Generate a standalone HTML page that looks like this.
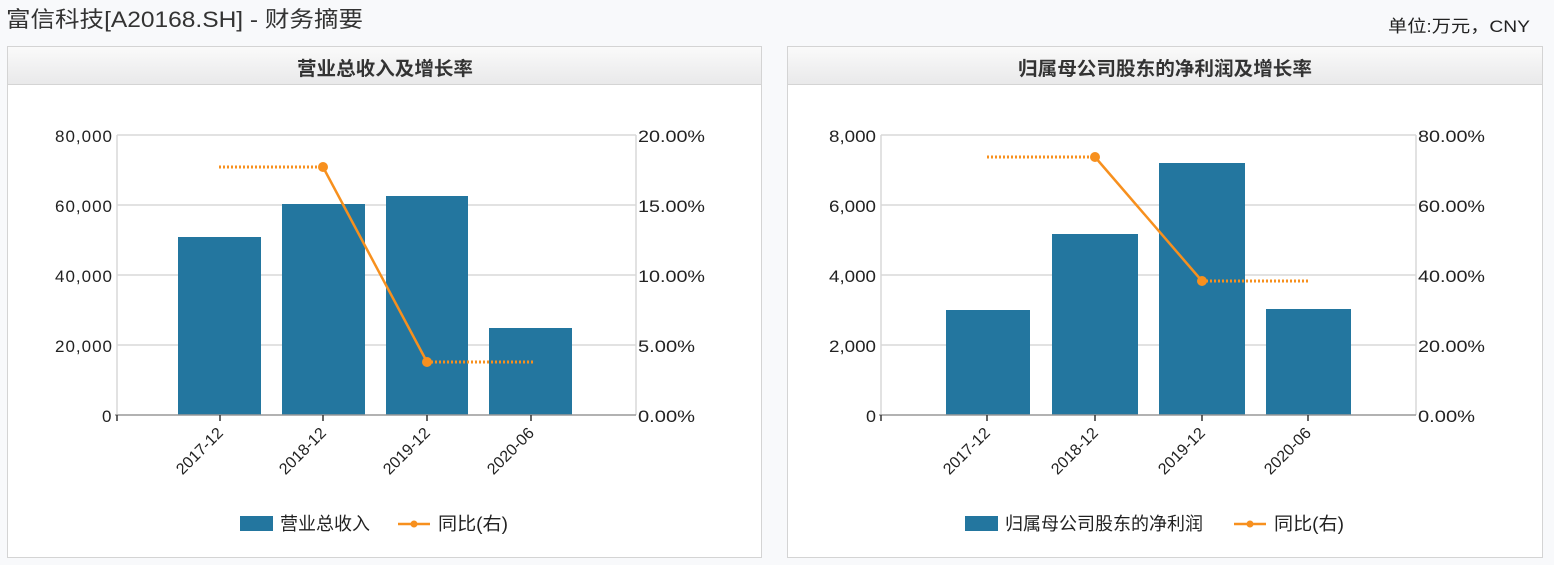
<!DOCTYPE html>
<html><head><meta charset="utf-8"><style>
html,body{margin:0;padding:0;background:#f8f9fb;width:1554px;height:565px;overflow:hidden}
svg{display:block;font-family:"Liberation Sans","Noto Sans CJK SC",sans-serif}
</style></head><body>
<svg width="1554" height="565" viewBox="0 0 1554 565">
<defs><linearGradient id="hg" x1="0" y1="0" x2="0" y2="1"><stop offset="0" stop-color="#fafafa"/><stop offset="1" stop-color="#e9e9ea"/></linearGradient></defs>
<text x="6" y="27" font-size="22" fill="#333" textLength="357" lengthAdjust="spacingAndGlyphs">富信科技[A20168.SH] - 财务摘要</text>
<text x="1388" y="32" font-size="17" fill="#222" textLength="142" lengthAdjust="spacingAndGlyphs">单位:万元，CNY</text>

<!-- left panel -->
<rect x="7.5" y="46.5" width="754" height="511" fill="#fff" stroke="#d4d4d4"/>
<rect x="8" y="47" width="753" height="37" fill="url(#hg)"/>
<line x1="8" y1="84.5" x2="761" y2="84.5" stroke="#d4d4d4"/>
<text x="297" y="75" font-size="19" font-weight="bold" fill="#333" textLength="176" lengthAdjust="spacingAndGlyphs">营业总收入及增长率</text>
<g stroke="#d8d8d8" stroke-width="1.5">
<line x1="117" y1="135" x2="636" y2="135"/><line x1="117" y1="205" x2="636" y2="205"/><line x1="117" y1="275" x2="636" y2="275"/><line x1="117" y1="345" x2="636" y2="345"/>
<line x1="636" y1="135" x2="636" y2="415"/><line x1="117" y1="135" x2="117" y2="415"/>
</g>
<g fill="#23769f">
<rect x="178" y="237" width="83" height="178"/><rect x="282" y="204" width="83" height="211"/><rect x="386" y="196" width="82" height="219"/><rect x="489" y="328" width="83" height="87"/>
</g>
<line x1="115" y1="415" x2="636" y2="415" stroke="#999" stroke-width="1.5"/>
<g stroke="#333" stroke-width="1.5"><line x1="117" y1="415" x2="117" y2="421"/><line x1="220" y1="415" x2="220" y2="421"/><line x1="323" y1="415" x2="323" y2="421"/><line x1="427" y1="415" x2="427" y2="421"/><line x1="531" y1="415" x2="531" y2="421"/></g>
<g stroke="#f7901e" stroke-width="3" stroke-dasharray="2 2" fill="none"><line x1="219" y1="167" x2="323" y2="167"/><line x1="427" y1="362" x2="533" y2="362"/></g>
<polyline points="323,167 427,362" stroke="#f7901e" stroke-width="2.5" fill="none"/>
<circle cx="323" cy="167" r="5" fill="#f7901e"/><circle cx="427" cy="362" r="5" fill="#f7901e"/>
<g font-size="17" fill="#222" lengthAdjust="spacingAndGlyphs">
<text x="55" y="142" textLength="57">80,000</text><text x="55" y="212" textLength="57">60,000</text><text x="55" y="282" textLength="57">40,000</text><text x="55" y="352" textLength="57">20,000</text><text x="102" y="422" textLength="10">0</text></g>
<g font-size="17" fill="#222">
<text x="638" y="142" textLength="67" lengthAdjust="spacingAndGlyphs">20.00%</text><text x="638" y="212" textLength="67" lengthAdjust="spacingAndGlyphs">15.00%</text><text x="638" y="282" textLength="67" lengthAdjust="spacingAndGlyphs">10.00%</text><text x="638" y="352" textLength="57" lengthAdjust="spacingAndGlyphs">5.00%</text><text x="638" y="422" textLength="57" lengthAdjust="spacingAndGlyphs">0.00%</text></g>
<g font-size="16" fill="#222" text-anchor="end">
<text transform="translate(224,434) rotate(-45)">2017-12</text><text transform="translate(327,434) rotate(-45)">2018-12</text><text transform="translate(431,434) rotate(-45)">2019-12</text><text transform="translate(535,434) rotate(-45)">2020-06</text></g>
<rect x="240" y="516" width="33" height="15" fill="#23769f"/>
<text x="280" y="530" font-size="18" fill="#222" textLength="90" lengthAdjust="spacingAndGlyphs">营业总收入</text>
<line x1="398" y1="524" x2="430" y2="524" stroke="#f7901e" stroke-width="2.5"/><circle cx="414" cy="524" r="3.5" fill="#f7901e"/>
<text x="438" y="530" font-size="18" fill="#222" textLength="70" lengthAdjust="spacingAndGlyphs">同比(右)</text>

<!-- right panel -->
<rect x="787.5" y="46.5" width="755" height="511" fill="#fff" stroke="#d4d4d4"/>
<rect x="788" y="47" width="754" height="37" fill="url(#hg)"/>
<line x1="788" y1="84.5" x2="1542" y2="84.5" stroke="#d4d4d4"/>
<text x="1018" y="75" font-size="19" font-weight="bold" fill="#333" textLength="294" lengthAdjust="spacingAndGlyphs">归属母公司股东的净利润及增长率</text>
<g stroke="#d8d8d8" stroke-width="1.5">
<line x1="881" y1="135" x2="1416" y2="135"/><line x1="881" y1="205" x2="1416" y2="205"/><line x1="881" y1="275" x2="1416" y2="275"/><line x1="881" y1="345" x2="1416" y2="345"/>
<line x1="1416" y1="135" x2="1416" y2="415"/><line x1="881" y1="135" x2="881" y2="415"/>
</g>
<g fill="#23769f">
<rect x="946" y="310" width="84" height="105"/><rect x="1052" y="234" width="86" height="181"/><rect x="1159" y="163" width="86" height="252"/><rect x="1266" y="309" width="85" height="106"/>
</g>
<line x1="879" y1="415" x2="1416" y2="415" stroke="#999" stroke-width="1.5"/>
<g stroke="#333" stroke-width="1.5"><line x1="881" y1="415" x2="881" y2="421"/><line x1="987" y1="415" x2="987" y2="421"/><line x1="1095" y1="415" x2="1095" y2="421"/><line x1="1202" y1="415" x2="1202" y2="421"/><line x1="1308" y1="415" x2="1308" y2="421"/></g>
<g stroke="#f7901e" stroke-width="3" stroke-dasharray="2 2" fill="none"><line x1="987" y1="157" x2="1095" y2="157"/><line x1="1202" y1="281" x2="1308" y2="281"/></g>
<polyline points="1095,157 1202,281" stroke="#f7901e" stroke-width="2.5" fill="none"/>
<circle cx="1095" cy="157" r="5" fill="#f7901e"/><circle cx="1202" cy="281" r="5" fill="#f7901e"/>
<g font-size="17" fill="#222">
<text x="829" y="142" textLength="47" lengthAdjust="spacingAndGlyphs">8,000</text><text x="829" y="212" textLength="47" lengthAdjust="spacingAndGlyphs">6,000</text><text x="829" y="282" textLength="47" lengthAdjust="spacingAndGlyphs">4,000</text><text x="829" y="352" textLength="47" lengthAdjust="spacingAndGlyphs">2,000</text><text x="866" y="422" textLength="10" lengthAdjust="spacingAndGlyphs">0</text></g>
<g font-size="17" fill="#222">
<text x="1418" y="142" textLength="67" lengthAdjust="spacingAndGlyphs">80.00%</text><text x="1418" y="212" textLength="67" lengthAdjust="spacingAndGlyphs">60.00%</text><text x="1418" y="282" textLength="67" lengthAdjust="spacingAndGlyphs">40.00%</text><text x="1418" y="352" textLength="67" lengthAdjust="spacingAndGlyphs">20.00%</text><text x="1418" y="422" textLength="57" lengthAdjust="spacingAndGlyphs">0.00%</text></g>
<g font-size="16" fill="#222" text-anchor="end">
<text transform="translate(991,434) rotate(-45)">2017-12</text><text transform="translate(1099,434) rotate(-45)">2018-12</text><text transform="translate(1206,434) rotate(-45)">2019-12</text><text transform="translate(1312,434) rotate(-45)">2020-06</text></g>
<rect x="965" y="516" width="33" height="15" fill="#23769f"/>
<text x="1005" y="530" font-size="18" fill="#222" textLength="198" lengthAdjust="spacingAndGlyphs">归属母公司股东的净利润</text>
<line x1="1234" y1="524" x2="1266" y2="524" stroke="#f7901e" stroke-width="2.5"/><circle cx="1250" cy="524" r="3.5" fill="#f7901e"/>
<text x="1274" y="530" font-size="18" fill="#222" textLength="70" lengthAdjust="spacingAndGlyphs">同比(右)</text>
</svg>
</body></html>
